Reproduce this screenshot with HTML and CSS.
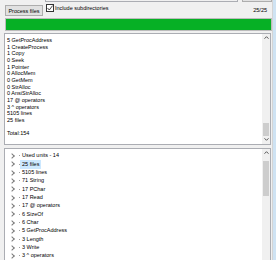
FILE: index.html
```html
<!DOCTYPE html>
<html lang="en">
<head>
    <meta charset="UTF-8">
    <title>Unit usage scanner</title>
    <link rel="stylesheet" href="styles.css">
</head>
<body>

<div class="frame">
    <div class="window">
        <!-- bottom edges of the path edit and browse button above -->
        <div class="top-edge">
            <span class="edit-edge"></span>
            <span class="btn-edge"></span>
        </div>

        <div class="toolbar">
            <button class="process-btn">Process files</button>
            <label class="check">
                <span class="box">
                    <svg width="6" height="6" viewBox="0 0 6 6"><path d="M0.5 3 L2.3 5 L5.6 0.6" fill="none" stroke="#333" stroke-width="0.9"/></svg>
                </span>
                Include subdirectories
            </label>
            <span class="count">25/25</span>
        </div>

        <div class="progress"><div class="fill" style="width: 100%"></div></div>

        <!-- summary memo -->
        <div class="memo">
            <div class="memo-text">
                <div>5 GetProcAddress</div>
                <div>1 CreateProcess</div>
                <div>1 Copy</div>
                <div>0 Seek</div>
                <div>1 Pointer</div>
                <div>0 AllocMem</div>
                <div>0 GetMem</div>
                <div>0 StrAlloc</div>
                <div>0 AnsiStrAlloc</div>
                <div>17 @ operators</div>
                <div>3 ^ operators</div>
                <div>5105 lines</div>
                <div>25 files</div>
                <div>&nbsp;</div>
                <div>Total:154</div>
            </div>
            <div class="scrollbar">
                <span class="arrow up"><svg width="5" height="3" viewBox="0 0 5 3"><path d="M0.5 2.7 L2.5 0.7 L4.5 2.7" fill="none" stroke="#444" stroke-width="0.9"/></svg></span>
                <span class="track"></span>
                <span class="thumb memo-thumb"></span>
                <span class="arrow down"><svg width="5" height="3" viewBox="0 0 5 3"><path d="M0.5 0.3 L2.5 2.3 L4.5 0.3" fill="none" stroke="#444" stroke-width="0.9"/></svg></span>
            </div>
        </div>

        <!-- results tree -->
        <div class="tree">
            <ul class="tree-items">
                <li><span class="exp"></span><span class="label">Used units - 14</span></li>
                <li><span class="exp"></span><span class="label selected">25 files</span></li>
                <li><span class="exp"></span><span class="label">5105 lines</span></li>
                <li><span class="exp"></span><span class="label">71 String</span></li>
                <li><span class="exp"></span><span class="label">17 PChar</span></li>
                <li><span class="exp"></span><span class="label">17 Read</span></li>
                <li><span class="exp"></span><span class="label">17 @ operators</span></li>
                <li><span class="exp"></span><span class="label">6 SizeOf</span></li>
                <li><span class="exp"></span><span class="label">6 Char</span></li>
                <li><span class="exp"></span><span class="label">5 GetProcAddress</span></li>
                <li><span class="exp"></span><span class="label">3 Length</span></li>
                <li><span class="exp"></span><span class="label">3 Write</span></li>
                <li><span class="exp"></span><span class="label">3 ^ operators</span></li>
            </ul>
            <div class="scrollbar">
                <span class="arrow up"><svg width="5" height="3" viewBox="0 0 5 3"><path d="M0.5 2.7 L2.5 0.7 L4.5 2.7" fill="none" stroke="#444" stroke-width="0.9"/></svg></span>
                <span class="thumb tree-thumb"></span>
                <span class="track"></span>
            </div>
        </div>
    </div>
    <div class="frame-edge"></div>
</div>

</body>
</html>
```

FILE: styles.css
```css
body {
    margin: 0;
    background-color: #f0f0f0;
    font-family: "Liberation Sans", Arial, sans-serif;
    font-size: 5.5px;
    color: #000;
    overflow: hidden;
}
.frame {
    display: flex;
    width: 276px;
    height: 260px;
    overflow: hidden;
}
.window {
    width: 272px;
    display: flex;
    flex-direction: column;
}
.frame-edge {
    width: 4px;
    border-left: 1px solid #d4d4d4;
    background-color: #cfe3f3;
}
.top-edge {
    display: flex;
    height: 2px;
}
.edit-edge {
    margin-left: 45px;
    width: 192px;
    border: 1px solid #abadb3;
    border-top: none;
}
.btn-edge {
    margin-left: 4px;
    width: 28px;
    border: 1px solid #adadad;
    border-top: none;
    background-color: #e1e1e1;
}
.toolbar {
    display: flex;
    align-items: flex-start;
    height: 14px;
    padding: 2px 0 0 5px;
}
.process-btn {
    width: 38px;
    height: 11px;
    margin-top: 1px;
    padding: 0;
    font-family: inherit;
    font-size: 5.5px;
    background-color: #e1e1e1;
    border: 1px solid #adadad;
    border-radius: 0;
}
.check {
    display: flex;
    align-items: center;
    gap: 1px;
    margin-left: 3px;
    height: 8px;
}
.box {
    display: flex;
    align-items: center;
    justify-content: center;
    width: 6px;
    height: 6px;
    border: 1px solid #333;
    background-color: #fff;
}
.count {
    margin-left: auto;
    margin-right: 5px;
    margin-top: 3px;
}
.progress {
    margin: 0 0 0 5px;
    width: 265px;
    height: 11px;
    border: 1px solid #bcbcbc;
    background-color: #e6e6e6;
}
.fill {
    height: 100%;
    background-color: #06b025;
}
.memo {
    display: flex;
    margin: 2px 0 0 4px;
    width: 265px;
    height: 110px;
    border: 1px solid #abadb3;
    background-color: #fff;
}
.memo-text {
    flex: 1;
    padding: 3px 0 0 2px;
    line-height: 6.65px;
    white-space: nowrap;
}
.scrollbar {
    display: flex;
    flex-direction: column;
    width: 8px;
    background-color: #f0f0f0;
}
.arrow {
    display: flex;
    align-items: center;
    justify-content: center;
    height: 8px;
    flex-shrink: 0;
}
.track {
    flex: 1;
}
.thumb {
    margin: 0 1px;
    background-color: #cdcdcd;
}
.memo-thumb {
    height: 13px;
}
.tree {
    display: flex;
    margin: 3px 0 0 4px;
    width: 265px;
    flex: 1;
    border: 1px solid #abadb3;
    border-bottom: none;
    background-color: #fff;
}
.tree-items {
    flex: 1;
    margin: 0;
    padding: 3px 0 0 0;
    list-style: none;
}
.tree-items li {
    display: flex;
    align-items: center;
    height: 8.33px;
}
.exp {
    width: 3px;
    height: 3px;
    margin-left: 5px;
    border-right: 0.8px solid #7a7a7a;
    border-top: 0.8px solid #7a7a7a;
    transform: rotate(45deg);
}
.label {
    position: relative;
    margin-left: 6px;
    padding: 0 1px;
    line-height: 7px;
    border: 1px solid transparent;
}
.label::before {
    content: "";
    position: absolute;
    left: -2px;
    top: 3px;
    width: 1px;
    height: 1px;
    background-color: #a0a0a0;
}
.label.selected {
    background-color: #cce8ff;
    border-color: #cce8ff;
}
.tree-thumb {
    height: 35px;
    margin-top: 4px;
}
```
